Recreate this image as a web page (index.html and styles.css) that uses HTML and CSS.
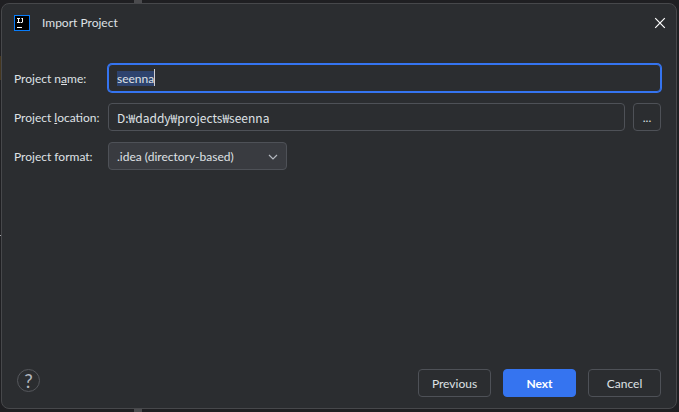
FILE: index.html
```html
<!DOCTYPE html>
<html lang="en">

<head>
  <meta charset="UTF-8">
  <meta name="viewport" content="width=device-width, initial-scale=1.0">
  <title>Import Project</title>
  <link rel="stylesheet" href="styles.css">
</head>

<body>
  <div class="dialog">
    <header class="title-bar">
      <svg class="app-icon" width="16" height="16" viewBox="0 0 16 16" fill="none">
        <rect x="0.5" y="0.5" width="15" height="15" fill="#000" stroke="#087cfa" />
        <path d="M3 3.5h3M4.5 3v5M3 7.5h3M8.5 3v4M6.5 7.5h2M3 12.5h5" stroke="#fff" />
        <path d="M7 3.5h1" stroke="#999" />
      </svg>
      <h1 class="title">Import Project</h1>
      <button class="close-btn" type="button" aria-label="Close">
        <svg width="12" height="12" viewBox="0 0 12 12" fill="none">
          <path d="M1.2 1.2l9.600 9.600M10.800 1.2L1.2 10.800" stroke="#fff" stroke-width="1.2" />
        </svg>
      </button>
    </header>

    <form class="import-form" id="import-form">
      <label for="project-name">Project n<u>a</u>me:</label>
      <div class="field">
        <input type="text" id="project-name" class="text-input" value="seenna" autocomplete="off" spellcheck="false">
        <span class="caret"></span>
      </div>

      <label for="project-location">Project <u>l</u>ocation:</label>
      <div class="field">
        <input type="text" id="project-location" class="text-input path-input" value="D:₩daddy₩projects₩seenna" spellcheck="false">
        <button class="btn browse-btn" type="button" aria-label="Browse">...</button>
      </div>

      <label for="project-format">Project format:</label>
      <div class="field">
        <div class="select-box">
          <select id="project-format" class="select">
            <option>.idea (directory-based)</option>
            <option>.ipr (file-based)</option>
          </select>
          <svg class="chevron" width="10" height="6" viewBox="0 0 10 6" fill="none">
            <path d="M1 1l4 4 4-4" stroke="#b4b8bf" stroke-width="1.2" />
          </svg>
        </div>
      </div>
    </form>

    <footer class="actions">
      <button class="help-btn" type="button" aria-label="Help">?</button>
      <button class="btn" type="button">Previous</button>
      <button class="btn primary" type="submit" form="import-form">Next</button>
      <button class="btn" type="button">Cancel</button>
    </footer>
  </div>

  <script>
    // select the suggested name so it can be typed over
    const nameInput = document.getElementById('project-name');
    nameInput.focus();
    nameInput.select();
  </script>
</body>

</html>
```

FILE: styles.css
```css
* {
  margin: 0;
  padding: 0;
  box-sizing: border-box;
}

body {
  display: flex;
  min-height: 100vh;
  padding: 3px 2px 3px 1px;
  /* edges of the editor behind the dialog */
  background:
    linear-gradient(#4b4b4e, #4b4b4e) 134px 0 / 8px 100% no-repeat,
    linear-gradient(#45371f, #45371f) 0 56px / 1px 24px no-repeat,
    linear-gradient(#a0a2a6, #a0a2a6) 0 235px / 1px 1px no-repeat,
    #1f1f22;
  color: #dfe1e5;
  font-family: Lato, "Noto Sans CJK KR", sans-serif;
  font-size: 12px;
  line-height: 18px;
}

button,
input,
select {
  color: inherit;
  font: inherit;
}

.dialog {
  flex: 1;
  display: flex;
  flex-direction: column;
  padding: 10px 15px 11px 12px;
  background-color: #2b2d30;
  border: 1px solid #47484b;
  border-radius: 8px;
}

.title-bar {
  display: flex;
  align-items: center;
  height: 18px;
}

.title {
  flex: 1;
  margin-left: 12px;
  font-size: 12px;
  font-weight: normal;
}

.close-btn {
  display: flex;
  padding: 0 0 0 4px;
  margin-right: -5px;
  background: none;
  border: none;
}

.import-form {
  display: grid;
  grid-template-columns: 94px 1fr;
  align-items: center;
  row-gap: 11px;
  margin-top: 32px;
}

.import-form label {
  padding-top: 2px;
  white-space: nowrap;
}

.field {
  position: relative;
  display: flex;
  gap: 8px;
}

.text-input {
  flex: 1;
  min-width: 0;
  height: 28px;
  padding: 0 8px;
  background-color: #2b2d30;
  border: 1px solid #4e5157;
  border-radius: 4px;
  outline: none;
}

.text-input:focus {
  border-color: #3574f0;
  box-shadow: 0 0 0 1px #3574f0;
}

.text-input::selection {
  background-color: #2e436e;
  color: #dfe1e5;
}

.path-input {
  font-family: "Noto Sans CJK KR", sans-serif;
}

.caret {
  position: absolute;
  top: 5px;
  left: 46px;
  width: 1px;
  height: 17px;
  background-color: #ced0d6;
}

.btn {
  width: 73px;
  height: 28px;
  padding-top: 2px;
  background-color: #2b2d30;
  border: 1px solid #4e5157;
  border-radius: 4px;
}

.browse-btn {
  width: 28px;
}

.primary {
  background-color: #3574f0;
  border-color: #3574f0;
  color: #fff;
  font-weight: bold;
}

.select-box {
  position: relative;
  width: 179px;
}

.select {
  display: block;
  width: 100%;
  height: 28px;
  padding: 2px 24px 0 8px;
  appearance: none;
  background-color: #393b40;
  border: 1px solid #4e5157;
  border-radius: 4px;
}

.chevron {
  position: absolute;
  top: 12px;
  right: 9px;
  pointer-events: none;
}

.actions {
  display: flex;
  gap: 12px;
  margin-top: auto;
}

.help-btn {
  width: 23px;
  height: 23px;
  margin-left: 3px;
  margin-right: auto;
  background: none;
  border: 1px solid #55575c;
  border-radius: 50%;
  color: #b4b8bf;
  font-size: 19px;
  line-height: 20px;
}
```
